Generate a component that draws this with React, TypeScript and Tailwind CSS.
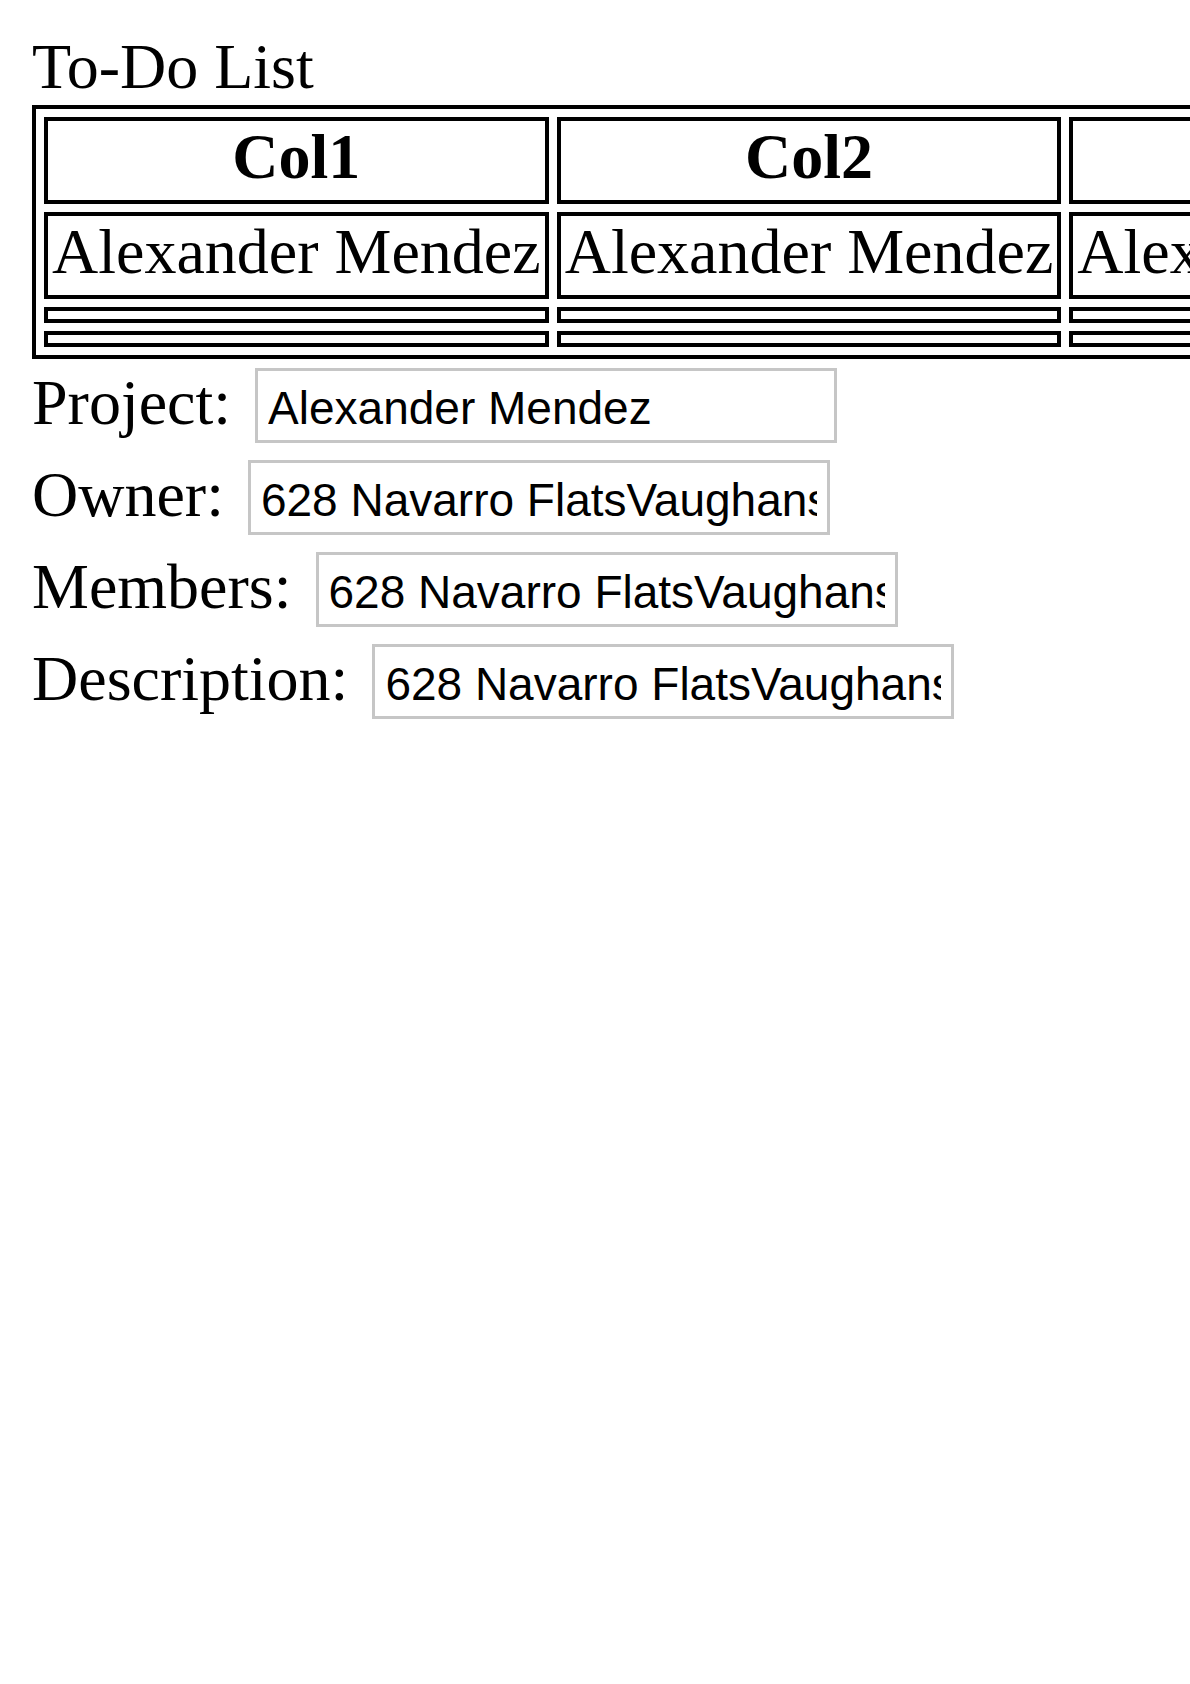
import React from 'react';

const cols = ['Col1', 'Col2', 'Col3'];
const names = ['Alexander Mendez', 'Alexander Mendez', 'Alexander Mendez'];

const fields = [
    { label: 'Project:', value: 'Alexander Mendez' },
    { label: 'Owner:', value: '628 Navarro FlatsVaughanstad, NY' },
    { label: 'Members:', value: '628 Navarro FlatsVaughanstad, NY' },
    { label: 'Description:', value: '628 Navarro FlatsVaughanstad, NY' },
];

const cell = "border-4 border-black px-1 pt-0 pb-2 leading-[71px] whitespace-nowrap";

const App: React.FC = () => {
    return (
        <div className="min-h-screen w-full overflow-hidden bg-white p-8 text-black font-['Liberation_Serif','Times_New_Roman',serif] text-[64px]">
            <div className="leading-[70px] mb-[3px]">To-Do List</div>

            <table className="border-separate border-spacing-2 border-4 border-black">
                <thead>
                    <tr>
                        {cols.map((c) => (
                            <th key={c} className={`${cell} font-bold text-center`}>{c}</th>
                        ))}
                    </tr>
                </thead>
                <tbody>
                    <tr>
                        {names.map((n, i) => (
                            <td key={i} className={`${cell} text-left`}>{n}</td>
                        ))}
                    </tr>
                    {/* two empty rows */}
                    {[0, 1].map((r) => (
                        <tr key={r}>
                            {cols.map((c) => (
                                <td key={c} className="border-4 border-black p-1"></td>
                            ))}
                        </tr>
                    ))}
                </tbody>
            </table>

            <div className="pt-2">
                {fields.map((f) => (
                    <div key={f.label} className="flex items-baseline gap-6 h-[92px]">
                        <span className="leading-[71px] whitespace-nowrap">{f.label}</span>
                        <input
                            type="text"
                            readOnly
                            defaultValue={f.value}
                            className="shrink-0 w-[582px] h-[75px] border-[3px] border-[#c6c6c6] bg-white px-[10px] pt-[5px] pb-0 text-[46px] leading-[52px] text-black font-['Liberation_Sans',Arial,sans-serif] outline-none"
                        />
                    </div>
                ))}
            </div>
        </div>
    );
};

export default App;
